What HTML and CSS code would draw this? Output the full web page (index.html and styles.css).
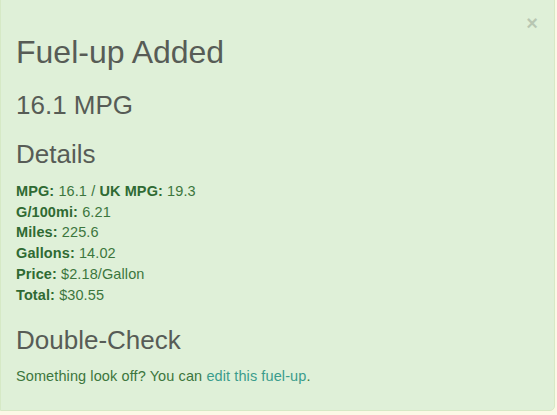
FILE: index.html
```html
<!DOCTYPE html>
<html lang="en">
<head>
    <meta charset="utf-8"/>
    <meta content="width=device-width, initial-scale=1" name="viewport"/>
    <title>Fuel-up Added</title>
    <link rel="stylesheet" href="styles.css">
</head>
<body>
    <div class="alert">
        <button type="button" class="close">&times;</button>

        <h2>Fuel-up Added</h2>
        <h3 class="mpg">16.1 MPG</h3>

        <h3>Details</h3>
        <div class="details">
            <div><b>MPG:</b> 16.1 / <b>UK MPG:</b> 19.3</div>
            <div><b>G/100mi:</b> 6.21</div>
            <div><b>Miles:</b> 225.6</div>
            <div><b>Gallons:</b> 14.02</div>
            <div><b>Price:</b> $2.18/Gallon</div>
            <div><b>Total:</b> $30.55</div>
        </div>

        <h3 class="check">Double-Check</h3>
        <p>Something look off? You can <a href="#">edit this fuel-up</a>.</p>
    </div>
</body>
</html>
```
FILE: styles.css
```css
body {
    margin: 0;
    padding: 0;
    font-family: "Liberation Sans", Arial, sans-serif;
    font-size: 14.5px;
    letter-spacing: 0.1px;
    background-color: #fcf8e6;
    color: #3c763d;
}
.alert {
    position: relative;
    box-sizing: border-box;
    width: 555px;
    margin-top: -5px;
    padding: 20px 15px 23px 15px;
    background-color: #dff0d8;
    border: 1px solid #d6e9c6;
    border-radius: 0 0 5px 0;
}
.close {
    position: absolute;
    top: 16px;
    right: 16px;
    padding: 0;
    border: 0;
    background: none;
    font-family: "Liberation Sans", Arial, sans-serif;
    font-size: 20px;
    font-weight: bold;
    color: #000;
    opacity: 0.17;
    cursor: pointer;
}
h2, h3 {
    margin: 0;
    font-weight: normal;
    letter-spacing: 0;
    color: #575c56;
}
h2 {
    margin-top: 20px;
    font-size: 32px;
    line-height: 33px;
}
h3 {
    margin-top: 22px;
    font-size: 26px;
    line-height: 27px;
}
h3.mpg {
    margin-top: 23px;
}
.details {
    margin-top: 13px;
    line-height: 20.7px;
}
.details b {
    color: #2f6a33;
}
p {
    margin: 12px 0 0 0;
    line-height: 20.7px;
}
a {
    color: #3a9c8c;
    text-decoration: none;
}
```
